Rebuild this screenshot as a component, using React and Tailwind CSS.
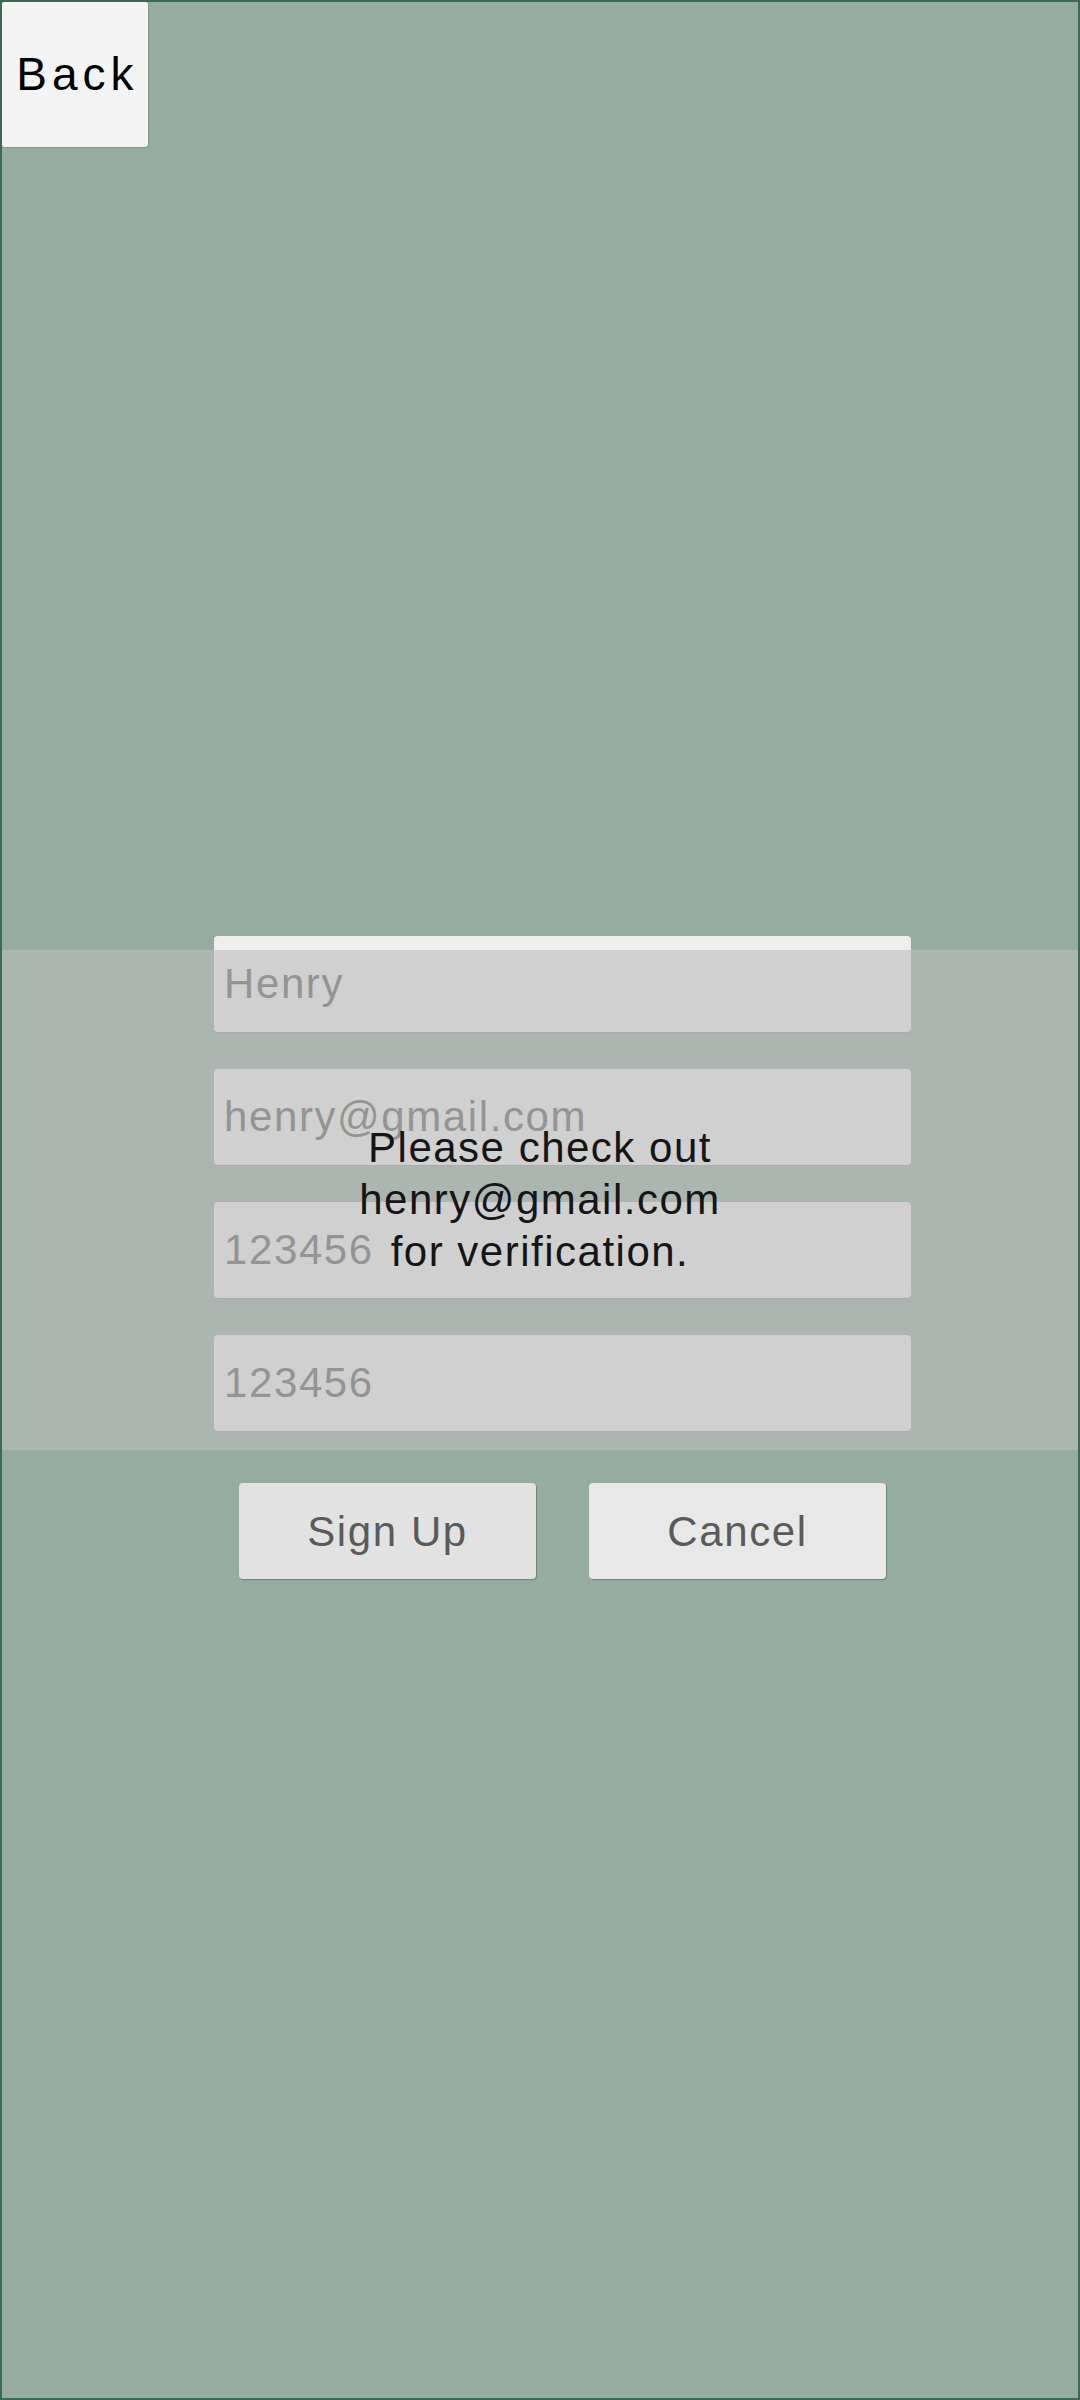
import React from 'react'

const FIELDS = ['Henry', 'henry@gmail.com', '123456', '123456']

export default function App() {
  return (
    <div
      className="relative w-[1080px] h-[2400px] border-2 border-[#3b6a50] bg-[#95ada0] flex flex-col items-start"
      style={{ fontFamily: '"Liberation Sans", Arial, sans-serif' }}
    >
      {/* Back */}
      <button className="w-[146px] h-[145px] bg-[#f4f4f4] rounded-[3px] shadow-[1px_1px_1px_rgba(0,0,0,0.15)] flex items-center justify-center text-[46px] tracking-[5px] text-black pl-[5px]">
        Back
      </button>

      {/* Form */}
      <div className="mt-[789px] ml-[212px] w-[697px] flex flex-col">
        <div className="flex flex-col gap-[37px]">
          {FIELDS.map((f, i) => (
            <input
              key={i}
              readOnly
              placeholder={f}
              className="h-[96px] w-full bg-[#eeeeee] rounded-[4px] shadow-[0_1px_1px_rgba(0,0,0,0.12)] px-[10px] text-[42px] tracking-[1.6px] outline-none placeholder:text-[#575757]"
              style={{ fontFamily: '"Liberation Sans", Arial, sans-serif' }}
            />
          ))}
        </div>

        <div className="mt-[52px] ml-[25px] flex gap-[53px]">
          <button className="w-[297px] h-[96px] bg-[#e2e2e2] rounded-[4px] shadow-[1px_1px_1px_rgba(0,0,0,0.25)] text-[42px] tracking-[1.6px] text-[#5a5a5a]">
            Sign Up
          </button>
          <button className="w-[297px] h-[96px] bg-[#e8e8e8] rounded-[4px] shadow-[1px_1px_1px_rgba(0,0,0,0.25)] text-[42px] tracking-[1.6px] text-[#5a5a5a]">
            Cancel
          </button>
        </div>
      </div>

      {/* Verification overlay */}
      <div className="absolute left-0 right-0 top-[948px] h-[500px] bg-[#bcbcbc]/60 flex items-center justify-center pointer-events-none">
        <p className="text-center text-[42px] leading-[52px] tracking-[1.5px] text-[#151515]">
          Please check out
          <br />
          henry@gmail.com
          <br />
          for verification.
        </p>
      </div>
    </div>
  )
}
